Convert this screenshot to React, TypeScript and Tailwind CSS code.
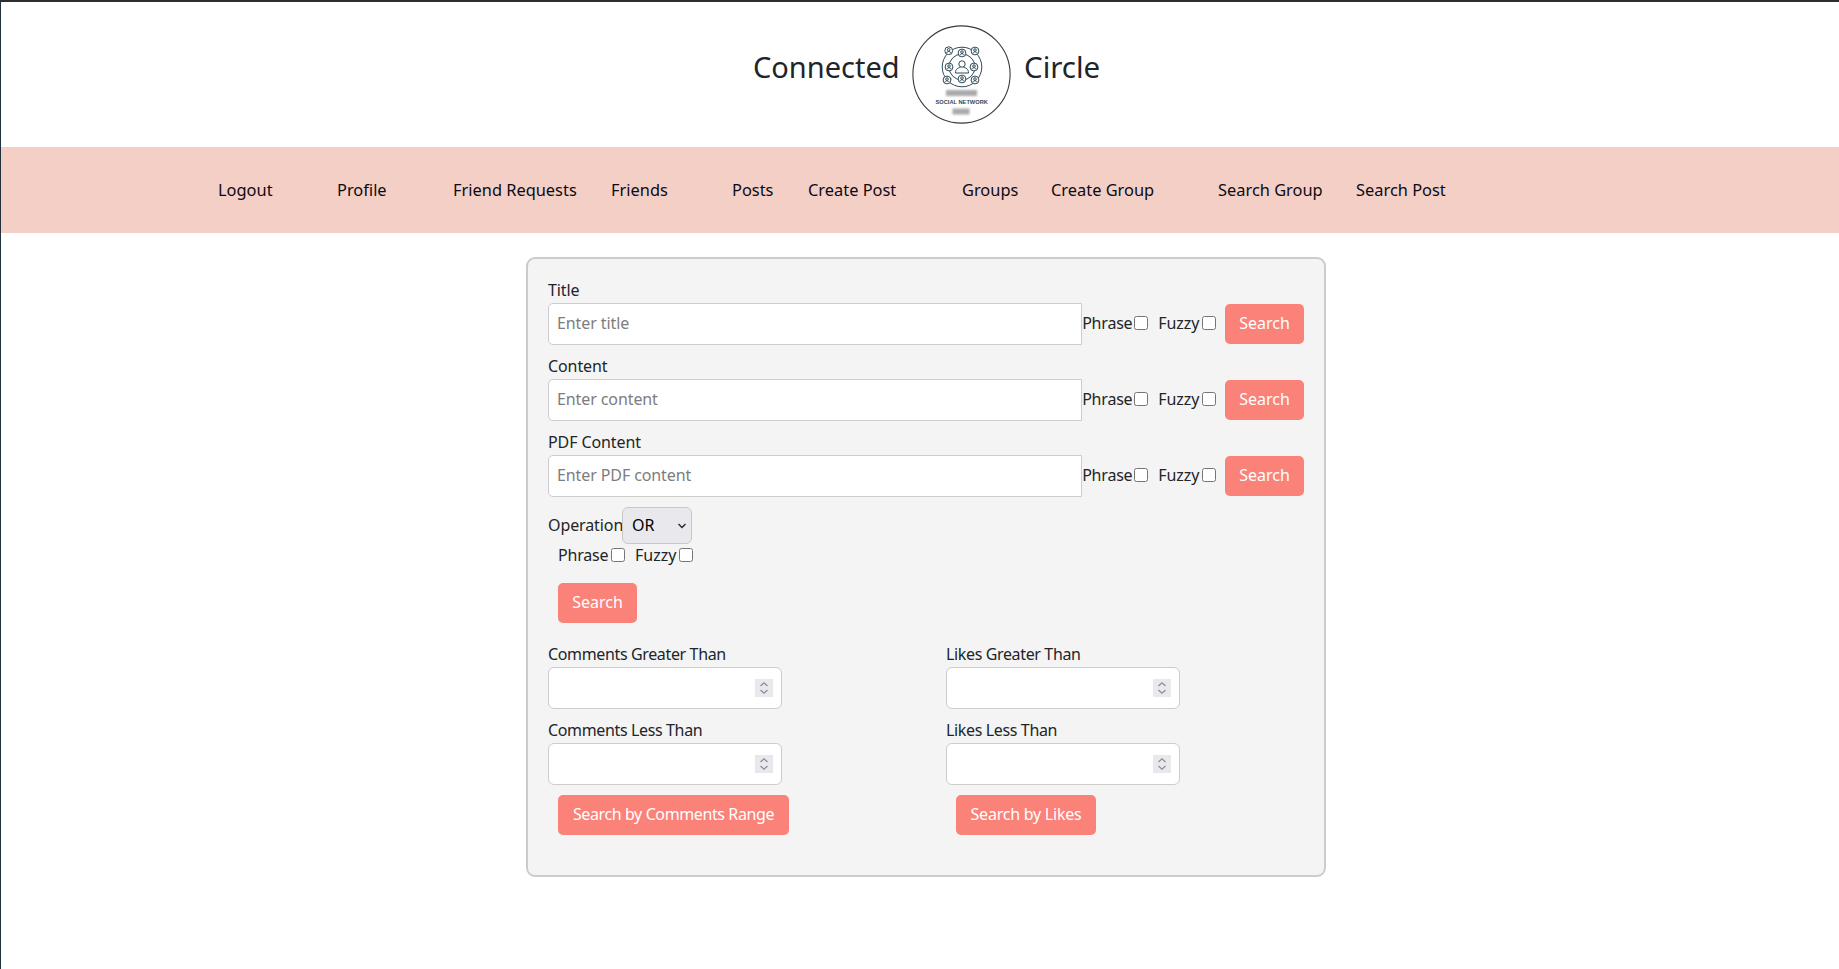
import React from "react";

const font = "[font-family:'Noto_Sans',sans-serif]";

const navItems: [string, string][] = [
  ["Logout", "ml-[217px] w-[55px]"],
  ["Profile", "ml-[64px] w-[52px]"],
  ["Friend Requests", "ml-[64px] w-[124px]"],
  ["Friends", "ml-[34px] w-[57px]"],
  ["Posts", "ml-[64px] w-[41px]"],
  ["Create Post", "ml-[35px] w-[89px]"],
  ["Groups", "ml-[65px] w-[55px]"],
  ["Create Group", "ml-[34px] w-[103px]"],
  ["Search Group", "ml-[64px] w-[104px]"],
  ["Search Post", "ml-[34px] w-[89px]"],
];

function Btn({ children, className = "" }: { children: React.ReactNode; className?: string }) {
  return (
    <button className={`h-10 rounded-[5px] bg-[#fa8279] pb-[2px] text-center whitespace-nowrap text-white ${className}`}>
      {children}
    </button>
  );
}

function Checks({ phrase, className = "" }: { phrase: string; className?: string }) {
  return (
    <div className={`flex items-center pb-[2px] ${className}`}>
      <span className={`${phrase} tracking-[-0.2px] whitespace-nowrap`}>Phrase</span>
      <input type="checkbox" className="h-[14px] w-[14px]" />
      <span className="ml-[10px] w-[44px] whitespace-nowrap">Fuzzy</span>
      <input type="checkbox" className="h-[14px] w-[14px]" />
    </div>
  );
}

function SearchRow({ label, placeholder }: { label: string; placeholder: string }) {
  return (
    <div className="mb-[10px]">
      <div className="h-6 leading-[22px] tracking-[-0.1px]">{label}</div>
      <div className="flex h-[42px] items-center">
        <input
          placeholder={placeholder}
          className="h-[42px] w-[535px] rounded-l-[5px] border border-[#ccc] bg-white pb-[2px] pl-2 tracking-[-0.1px] placeholder:text-[#7d7d7d]"
        />
        <Checks phrase="w-[52px]" />
        <Btn className="ml-[9px] w-[79px]">Search</Btn>
      </div>
    </div>
  );
}

function NumberField({ label }: { label: string }) {
  return (
    <div className="mb-[10px]">
      <div className="h-6 leading-[23px] tracking-[-0.36px] whitespace-nowrap">{label}</div>
      <div className="relative h-[42px] w-[234px]">
        <input className="h-full w-full rounded-[6px] border border-[#ccc] bg-white" />
        <div className="absolute top-[12px] right-[9px] flex h-[18px] w-[18px] items-center justify-center bg-[#e9e9ed]">
          <svg width="18" height="18" viewBox="0 0 18 18" fill="none" stroke="#8d8d9b" strokeWidth="1.3">
            <path d="M5.5 7 9 3.8 12.5 7" />
            <path d="M5.5 11 9 14.2 12.5 11" />
          </svg>
        </div>
      </div>
    </div>
  );
}

function Logo() {
  const sats: [number, number, number][] = [
    [36.7, 25.7, 3.9], [63, 26, 3.9], [35, 55, 3.9], [63, 55, 3.9],
    [50, 28, 3.9], [50, 54, 3.9], [37, 42, 3.9], [62, 42, 3.9],
  ];
  return (
    <svg width="99" height="99" viewBox="0 0 99 99" fill="none" className="shrink-0">
      <defs>
        <filter id="b" x="-20%" y="-60%" width="140%" height="220%">
          <feGaussianBlur stdDeviation="0.8" />
        </filter>
      </defs>
      <circle cx="49.5" cy="49.5" r="48.6" fill="#fff" stroke="#3a3a3a" strokeWidth="1.1" />
      <g stroke="#2f4a59" strokeWidth="1">
        <circle cx="50" cy="42" r="19.8" />
        <circle cx="50" cy="42" r="13" />
        <line x1="39.5" y1="29" x2="37" y2="27" />
        <line x1="60.5" y1="29" x2="62" y2="27" />
        <line x1="39.5" y1="54" x2="37" y2="53" />
        <line x1="60.5" y1="54" x2="61" y2="53" />
        {sats.map(([x, y, r]) => (
          <g key={`${x}-${y}`}>
            <circle cx={x} cy={y} r={r} fill="#fff" />
            <circle cx={x} cy={y - 0.9} r={1.3} />
            <path d={`M${x - 2} ${y + 2.3}c0-2 4-2 4 0`} />
          </g>
        ))}
        <circle cx="50" cy="39" r="3.2" />
        <path d="M43.5 48c0-4.5 3-5 5-5.8M56.5 48c0-4.5-3-5-5-5.8M43.5 48h13" />
      </g>
      <rect x="34" y="65" width="31" height="6" fill="#aaaaaa" filter="url(#b)" />
      <text x="49.7" y="79" textAnchor="middle" fill="#2f4a59" fontSize="5.7" fontWeight="700" fontFamily="'Liberation Sans',sans-serif">
        SOCIAL NETWORK
      </text>
      <rect x="40.5" y="83.5" width="17" height="6" fill="#aaaaaa" filter="url(#b)" />
    </svg>
  );
}

export default function App() {
  return (
    <div className={`min-h-[969px] border-t-2 border-l border-t-[#2a2f33] border-l-[#1f323c] bg-white text-base text-[#212529] ${font}`}>
      <header className="flex h-[145px] justify-center pt-[23px] pl-[13px] text-[#212529]">
        <h1 className="mt-[19px] mr-[1px] w-[145px] text-right text-[29px] leading-[45px] whitespace-nowrap">Connected</h1>
        <div className="ml-[13px]">
          <Logo />
        </div>
        <h1 className="mt-[19px] ml-[13px] w-[76px] text-[29.5px] leading-[45px] whitespace-nowrap">Circle</h1>
      </header>

      <nav className="flex h-[86px] items-center bg-[#f4cfc6] text-[16.4px] text-[#0b0b14]">
        {navItems.map(([t, c]) => (
          <a key={t} className={`whitespace-nowrap ${c}`}>
            {t}
          </a>
        ))}
      </nav>

      <div className="flex justify-center pt-[24px] pl-[12px]">
        <form className="h-[620px] w-[800px] rounded-[9px] border-2 border-[#ccc] bg-[#f4f4f4] px-[20px] pt-[20px]">
          <SearchRow label="Title" placeholder="Enter title" />
          <SearchRow label="Content" placeholder="Enter content" />
          <SearchRow label="PDF Content" placeholder="Enter PDF content" />

          <div className="flex h-[37px] items-center">
            <span className="w-[74px] pb-[2px] tracking-[-0.1px] whitespace-nowrap">Operation</span>
            <div className="relative h-[37px] w-[70px]">
              <select className="h-full w-full appearance-none rounded-[6px] border border-[#c8c8c8] bg-[#e9e9ed] pb-[2px] pl-[9px] text-black">
                <option>OR</option>
              </select>
              <svg width="10" height="6" viewBox="0 0 10 6" fill="none" stroke="#222" strokeWidth="1.3" className="pointer-events-none absolute top-[16px] right-[5px]">
                <path d="M1.5 1 5 4.5 8.5 1" />
              </svg>
            </div>
          </div>
          <div className="mt-[1px] ml-[10px] flex h-[21px] items-center">
            <Checks phrase="w-[53px]" />
          </div>
          <Btn className="mt-[17px] ml-[10px] block w-[79px]">Search</Btn>

          <div className="mt-[20px] grid grid-cols-[398px_1fr]">
            <div>
              <NumberField label="Comments Greater Than" />
              <NumberField label="Comments Less Than" />
              <Btn className="ml-[10px] w-[231px] tracking-[-0.39px]">Search by Comments Range</Btn>
            </div>
            <div>
              <NumberField label="Likes Greater Than" />
              <NumberField label="Likes Less Than" />
              <Btn className="ml-[10px] w-[140px] tracking-[-0.23px]">Search by Likes</Btn>
            </div>
          </div>
        </form>
      </div>
    </div>
  );
}
